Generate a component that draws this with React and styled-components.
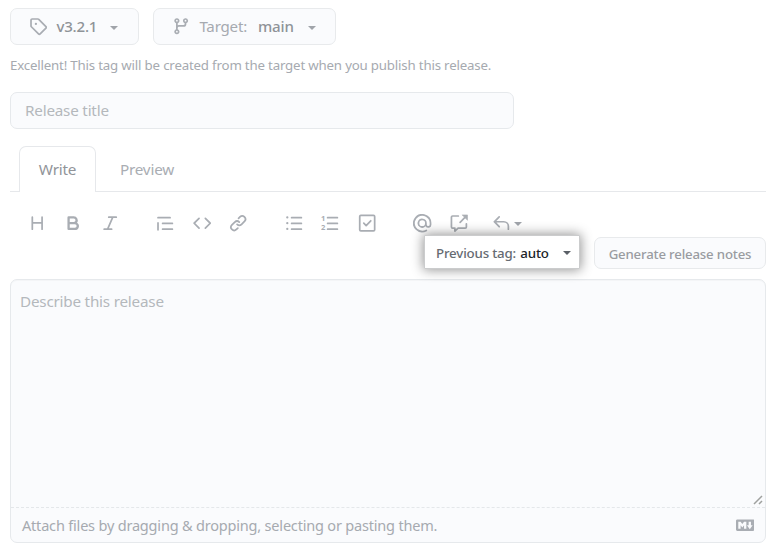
import React from "react";
import styled, { createGlobalStyle } from "styled-components";

const GlobalStyle = createGlobalStyle`
  * { box-sizing: border-box; }
  body {
    margin: 0;
    background: #fff;
    font-family: "Noto Sans", "Open Sans", sans-serif;
    color: #a6aab0;
    overflow: hidden;
  }
  button, input, p, span { letter-spacing: -0.0135em; }
  button, input { font-family: inherit; margin: 0; }
`;

const Page = styled.main`
  width: 772px;
  height: 551px;
  padding: 8px 6px 8px 10px;
  display: flex;
  flex-direction: column;
`;

const SelectorRow = styled.div`
  display: flex;
  gap: 14px;
`;

const SelectorButton = styled.button`
  display: flex;
  align-items: center;
  width: ${(p) => p.$width}px;
  height: 37px;
  padding: 0 0 0 18px;
  border: 1px solid #e8eaec;
  border-radius: 7px;
  background: #fafbfd;
  color: #a6aab0;
  font-size: 15.1px;
  line-height: 20px;
  white-space: pre;
`;

const Strong = styled.span`
  font-weight: 500;
  color: #8f9398;
  margin-left: ${(p) => p.$gap || 0}px;
  padding-bottom: 2px;
`;

const Label = styled.span`
  margin-left: 9px;
  padding-bottom: 2px;
`;

const Caret = styled.span`
  width: 0;
  height: 0;
  margin-left: ${(p) => p.$gap}px;
  margin-top: ${(p) => p.$drop || 0}px;
  border: solid transparent;
  border-width: 4.6px 4.6px 0;
  border-top-color: ${(p) => p.$color || "#a0a4aa"};
`;

const Hint = styled.p`
  margin: 10px 0 0;
  height: 20px;
  font-size: 13.27px;
  line-height: 20px;
  white-space: nowrap;
`;

const TitleInput = styled.input`
  width: 504px;
  height: 37px;
  margin-top: 17px;
  padding: 0 14px 1px;
  border: 1px solid #e6e9ec;
  border-radius: 7px;
  background: #fafbfd;
  font-size: 15.24px;
  outline: none;
  &::placeholder { color: #b4b8bc; opacity: 1; }
`;

const TabBar = styled.nav`
  display: flex;
  height: 46px;
  margin-top: 17px;
  padding-left: 9px;
  box-shadow: inset 0 -1px #e6e8eb;
`;

const Tab = styled.button`
  width: ${(p) => p.$width}px;
  padding: 0 0 2px;
  border: 1px solid ${(p) => (p.$active ? "#e6e8eb" : "transparent")};
  border-bottom: 0;
  border-radius: 7px 7px 0 0;
  background: ${(p) => (p.$active ? "#fff" : "transparent")};
  color: ${(p) => (p.$active ? "#919499" : "#a9adb3")};
  font-size: 15.3px;
`;

const Toolbar = styled.div`
  display: flex;
  height: 20px;
  margin-top: 22px;
  padding-left: 18px;
`;

const Tool = styled.span`
  display: flex;
  align-items: center;
  height: 19px;
  width: ${(p) => p.$width || 36.6}px;
  flex: none;
`;

const Svg = styled.svg`
  display: block;
  flex: none;
  fill: ${(p) => (p.$stroke ? "none" : "#a9adb3")};
  stroke: ${(p) => (p.$stroke ? "#a9adb3" : "none")};
  stroke-width: 1.5;
  stroke-linecap: round;
  stroke-linejoin: round;
`;

const Digit = styled.text`
  fill: #a9adb3;
  stroke: none;
  font: 700 6.6px "Noto Sans", sans-serif;
`;

const NotesRow = styled.div`
  position: relative;
  display: flex;
  justify-content: flex-end;
  align-items: flex-end;
  gap: 14px;
  height: 34px;
  margin-top: 1px;
`;

const PreviousTag = styled.button`
  display: flex;
  align-items: center;
  align-self: flex-start;
  width: 156px;
  height: 34px;
  padding: 1px 0 0 11px;
  border: 1px solid #cbcccd;
  border-radius: 1px;
  background: #fff;
  box-shadow: 0 0 12px 1px rgba(0, 0, 0, 0.42);
  color: #666b72;
  font-size: 13.3px;
  font-weight: 500;
  white-space: pre;
`;

const TagValue = styled.span`
  margin-left: 1px;
  color: #202429;
  font-weight: 500;
  font-size: 13.3px;
`;

const GenerateButton = styled.button`
  width: 172px;
  height: 32px;
  padding: 1px 0 0;
  border: 1px solid #e8eaec;
  border-radius: 7px;
  background: #fafbfd;
  color: #999ca1;
  font-size: 13.22px;
  font-weight: 500;
  white-space: nowrap;
`;

const Editor = styled.section`
  display: flex;
  flex-direction: column;
  height: 264px;
  margin-top: 10px;
  border: 1px solid #e6e9ec;
  border-radius: 7px;
  background: #fafbfd;
  box-shadow: inset 0 1px #f4f5f7;
`;

const Body = styled.div`
  display: flex;
  justify-content: space-between;
  height: 228px;
  padding: 11px 2px 2px 9px;
  border-bottom: 1px dashed #e4e7ea;
  font-size: 15.24px;
  line-height: 20px;
  color: #b4b8bc;
`;

const Grip = styled.svg`
  align-self: flex-end;
  fill: none;
  stroke: #9fa19f;
  stroke-width: 1.5;
`;

const Footer = styled.div`
  display: flex;
  flex: 1;
  align-items: center;
  justify-content: space-between;
  padding: 0 11px 0 11px;
  font-size: 14.53px;
  color: #a6aab0;
`;

const PATHS = {
  tag: "M1 7.775V2.75C1 1.784 1.784 1 2.75 1h5.025c.464 0 .91.184 1.238.513l6.25 6.25a1.75 1.75 0 0 1 0 2.474l-5.026 5.026a1.75 1.75 0 0 1-2.474 0l-6.25-6.25A1.752 1.752 0 0 1 1 7.775Zm1.5 0c0 .066.026.13.073.177l6.25 6.25a.25.25 0 0 0 .354 0l5.025-5.025a.25.25 0 0 0 0-.354l-6.25-6.25a.25.25 0 0 0-.177-.073H2.75a.25.25 0 0 0-.25.25ZM6 5a1 1 0 1 1 0 2 1 1 0 0 1 0-2Z",
  branch: "M9.5 3.25a2.25 2.25 0 1 1 3 2.122V6A2.5 2.5 0 0 1 10 8.5H6a1 1 0 0 0-1 1v1.128a2.251 2.251 0 1 1-1.5 0V5.372a2.25 2.25 0 1 1 1.5 0v1.836A2.493 2.493 0 0 1 6 7h4a1 1 0 0 0 1-1v-.628A2.25 2.25 0 0 1 9.5 3.25Zm-6 0a.75.75 0 1 0 1.5 0 .75.75 0 0 0-1.5 0Zm8.25-.75a.75.75 0 1 0 0 1.5.75.75 0 0 0 0-1.5ZM4.25 12a.75.75 0 1 0 0 1.5.75.75 0 0 0 0-1.5Z",
  heading: "M3.75 2a.75.75 0 0 1 .75.75V7h7V2.75a.75.75 0 0 1 1.5 0v10.5a.75.75 0 0 1-1.5 0V8.5h-7v4.75a.75.75 0 0 1-1.5 0V2.75A.75.75 0 0 1 3.75 2Z",
  bold: "M4 2h4.5a3.501 3.501 0 0 1 2.852 5.53A3.499 3.499 0 0 1 9.5 14H4a1 1 0 0 1-1-1V3a1 1 0 0 1 1-1Zm1 7v3h4.5a1.5 1.5 0 0 0 0-3Zm3.5-2a1.5 1.5 0 0 0 0-3H5v3Z",
  italic: "M6 2.75A.75.75 0 0 1 6.75 2h6.5a.75.75 0 0 1 0 1.5h-2.505l-3.858 9H9.25a.75.75 0 0 1 0 1.5h-6.5a.75.75 0 0 1 0-1.5h2.505l3.858-9H6.75A.75.75 0 0 1 6 2.75Z",
  quote: "M1.75 2.5h10.5a.75.75 0 0 1 0 1.5H1.75a.75.75 0 0 1 0-1.5Zm4 5h8.5a.75.75 0 0 1 0 1.5h-8.5a.75.75 0 0 1 0-1.5Zm0 5h8.5a.75.75 0 0 1 0 1.5h-8.5a.75.75 0 0 1 0-1.5ZM2.5 7.75v6a.75.75 0 0 1-1.5 0v-6a.75.75 0 0 1 1.5 0Z",
  code: "m11.28 3.22 4.25 4.25a.75.75 0 0 1 0 1.06l-4.25 4.25a.749.749 0 0 1-1.275-.326.749.749 0 0 1 .215-.734L13.94 8l-3.72-3.72a.749.749 0 0 1 .326-1.275.749.749 0 0 1 .734.215Zm-6.56 0a.751.751 0 0 1 1.042.018.751.751 0 0 1 .018 1.042L2.06 8l3.72 3.72a.749.749 0 0 1-.326 1.275.749.749 0 0 1-.734-.215L.47 8.53a.75.75 0 0 1 0-1.06Z",
  link: "m7.775 3.275 1.25-1.25a3.5 3.5 0 1 1 4.95 4.95l-2.5 2.5a3.5 3.5 0 0 1-4.95 0 .751.751 0 0 1 .018-1.042.751.751 0 0 1 1.042-.018 1.998 1.998 0 0 0 2.83 0l2.5-2.5a2.002 2.002 0 0 0-2.83-2.83l-1.25 1.25a.751.751 0 0 1-1.042-.018.751.751 0 0 1-.018-1.042Zm-4.69 9.64a1.998 1.998 0 0 0 2.83 0l1.25-1.25a.751.751 0 0 1 1.042.018.751.751 0 0 1 .018 1.042l-1.25 1.25a3.5 3.5 0 1 1-4.95-4.95l2.5-2.5a3.5 3.5 0 0 1 4.95 0 .751.751 0 0 1-.018 1.042.751.751 0 0 1-1.042.018 1.998 1.998 0 0 0-2.83 0l-2.5 2.5a1.998 1.998 0 0 0 0 2.83Z",
  list: "M5.75 2.5h8.5a.75.75 0 0 1 0 1.5h-8.5a.75.75 0 0 1 0-1.5Zm0 5h8.5a.75.75 0 0 1 0 1.5h-8.5a.75.75 0 0 1 0-1.5Zm0 5h8.5a.75.75 0 0 1 0 1.5h-8.5a.75.75 0 0 1 0-1.5ZM2 14a1 1 0 1 1 0-2 1 1 0 0 1 0 2Zm1-6a1 1 0 1 1-2 0 1 1 0 0 1 2 0ZM2 4a1 1 0 1 1 0-2 1 1 0 0 1 0 2Z",
  mention: "M4.75 2.37a6.501 6.501 0 0 0 6.5 11.26.75.75 0 0 1 .75 1.298A7.999 7.999 0 0 1 .989 4.148 8 8 0 0 1 16 7.75v1.5a2.75 2.75 0 0 1-5.072 1.475 3.999 3.999 0 0 1-6.65-4.19A4 4 0 0 1 12 8v1.25a1.25 1.25 0 0 0 2.5 0V7.867a6.5 6.5 0 0 0-9.75-5.496ZM10.5 8a2.5 2.5 0 1 0-5 0 2.5 2.5 0 0 0 5 0Z",
  reply: "M6.78 1.97a.75.75 0 0 1 0 1.06L3.81 6h6.44A4.75 4.75 0 0 1 15 10.75v2.5a.75.75 0 0 1-1.5 0v-2.5a3.25 3.25 0 0 0-3.25-3.25H3.81l2.97 2.97a.749.749 0 0 1-.326 1.275.749.749 0 0 1-.734-.215L1.47 7.28a.75.75 0 0 1 0-1.06l4.25-4.25a.75.75 0 0 1 1.06 0Z",
  markdown: "M14.85 3c.63 0 1.15.52 1.14 1.15v7.7c0 .63-.51 1.15-1.15 1.15H1.15C.52 13 0 12.48 0 11.84V4.15C0 3.52.52 3 1.15 3ZM9 11V5H7L5.5 7 4 5H2v6h2V8l1.5 1.92L7 8v3Zm2.99.5L14.5 8H13V5h-2v3H9.5Z",
};

const Icon = ({ name, size = 18.4 }) => (
  <Svg width={size} height={size} viewBox="0 0 16 16" aria-hidden="true">
    <path d={PATHS[name]} />
  </Svg>
);

const OrderedIcon = () => (
  <Svg $stroke width="18.4" height="18.4" viewBox="0 0 16 16">
    <path d="M5.75 3.25h8.5M5.75 8.25h8.5M5.75 13.25h8.5" />
    <Digit x="0" y="6.2">1</Digit>
    <Digit x="0" y="14">2</Digit>
  </Svg>
);

const TaskIcon = () => (
  <Svg $stroke width="18.4" height="18.4" viewBox="0 0 16 16">
    <rect x="1.5" y="1.2" width="13" height="13.4" rx="1" />
    <path d="m5 8 2.1 2.1 4-4.2" />
  </Svg>
);

const CrossReferenceIcon = () => (
  <Svg $stroke width="18.4" height="18.4" viewBox="0 0 16 16">
    <path d="M7.25 1.75h-5a1 1 0 0 0-1 1v8.5a1 1 0 0 0 1 1h2v2.6l2.8-2.6h6.2a1 1 0 0 0 1-1V8.5M8.8 7.2l4-4" />
    <path d="M10.8 .8h4.4v4.4Z" fill="#a9adb3" strokeWidth="0.5" />
  </Svg>
);

export default function App() {
  return (
    <Page>
      <GlobalStyle />
      <SelectorRow>
        <SelectorButton $width={129}>
          <Icon name="tag" />
          <Strong $gap={9}>v3.2.1</Strong>
          <Caret $gap={13} $drop={2} />
        </SelectorButton>
        <SelectorButton $width={183}>
          <Icon name="branch" />
          <Label>Target:</Label>
          <Strong $gap={11}>main</Strong>
          <Caret $gap={14} $drop={2} />
        </SelectorButton>
      </SelectorRow>
      <Hint>Excellent! This tag will be created from the target when you publish this release.</Hint>
      <TitleInput placeholder="Release title" />
      <TabBar>
        <Tab $active $width={77}>Write</Tab>
        <Tab $width={102}>Preview</Tab>
      </TabBar>
      <Toolbar>
        <Tool $width={36.4}><Icon name="heading" /></Tool>
        <Tool $width={36.6}><Icon name="bold" /></Tool>
        <Tool $width={54.6}><Icon name="italic" /></Tool>
        <Tool $width={37.2}><Icon name="quote" /></Tool>
        <Tool><Icon name="code" /></Tool>
        <Tool $width={55.2}><Icon name="link" /></Tool>
        <Tool $width={36.4}><Icon name="list" /></Tool>
        <Tool $width={37.4}><OrderedIcon /></Tool>
        <Tool $width={55}><TaskIcon /></Tool>
        <Tool $width={37}><Icon name="mention" /></Tool>
        <Tool $width={41.8}><CrossReferenceIcon /></Tool>
        <Tool><Icon name="reply" /><Caret $gap={3} $drop={1} /></Tool>
      </Toolbar>
      <NotesRow>
        <PreviousTag>
          <span>Previous tag: </span>
          <TagValue>auto</TagValue>
          <Caret $gap={14} $color="#5b6067" />
        </PreviousTag>
        <GenerateButton>Generate release notes</GenerateButton>
      </NotesRow>
      <Editor>
        <Body>
          <span>Describe this release</span>
          <Grip width="10" height="10" viewBox="0 0 10 10">
            <path d="M1 9 9 1M6 9l3-3" />
          </Grip>
        </Body>
        <Footer>
          <span>Attach files by dragging &amp; dropping, selecting or pasting them.</span>
          <Icon name="markdown" />
        </Footer>
      </Editor>
    </Page>
  );
}
